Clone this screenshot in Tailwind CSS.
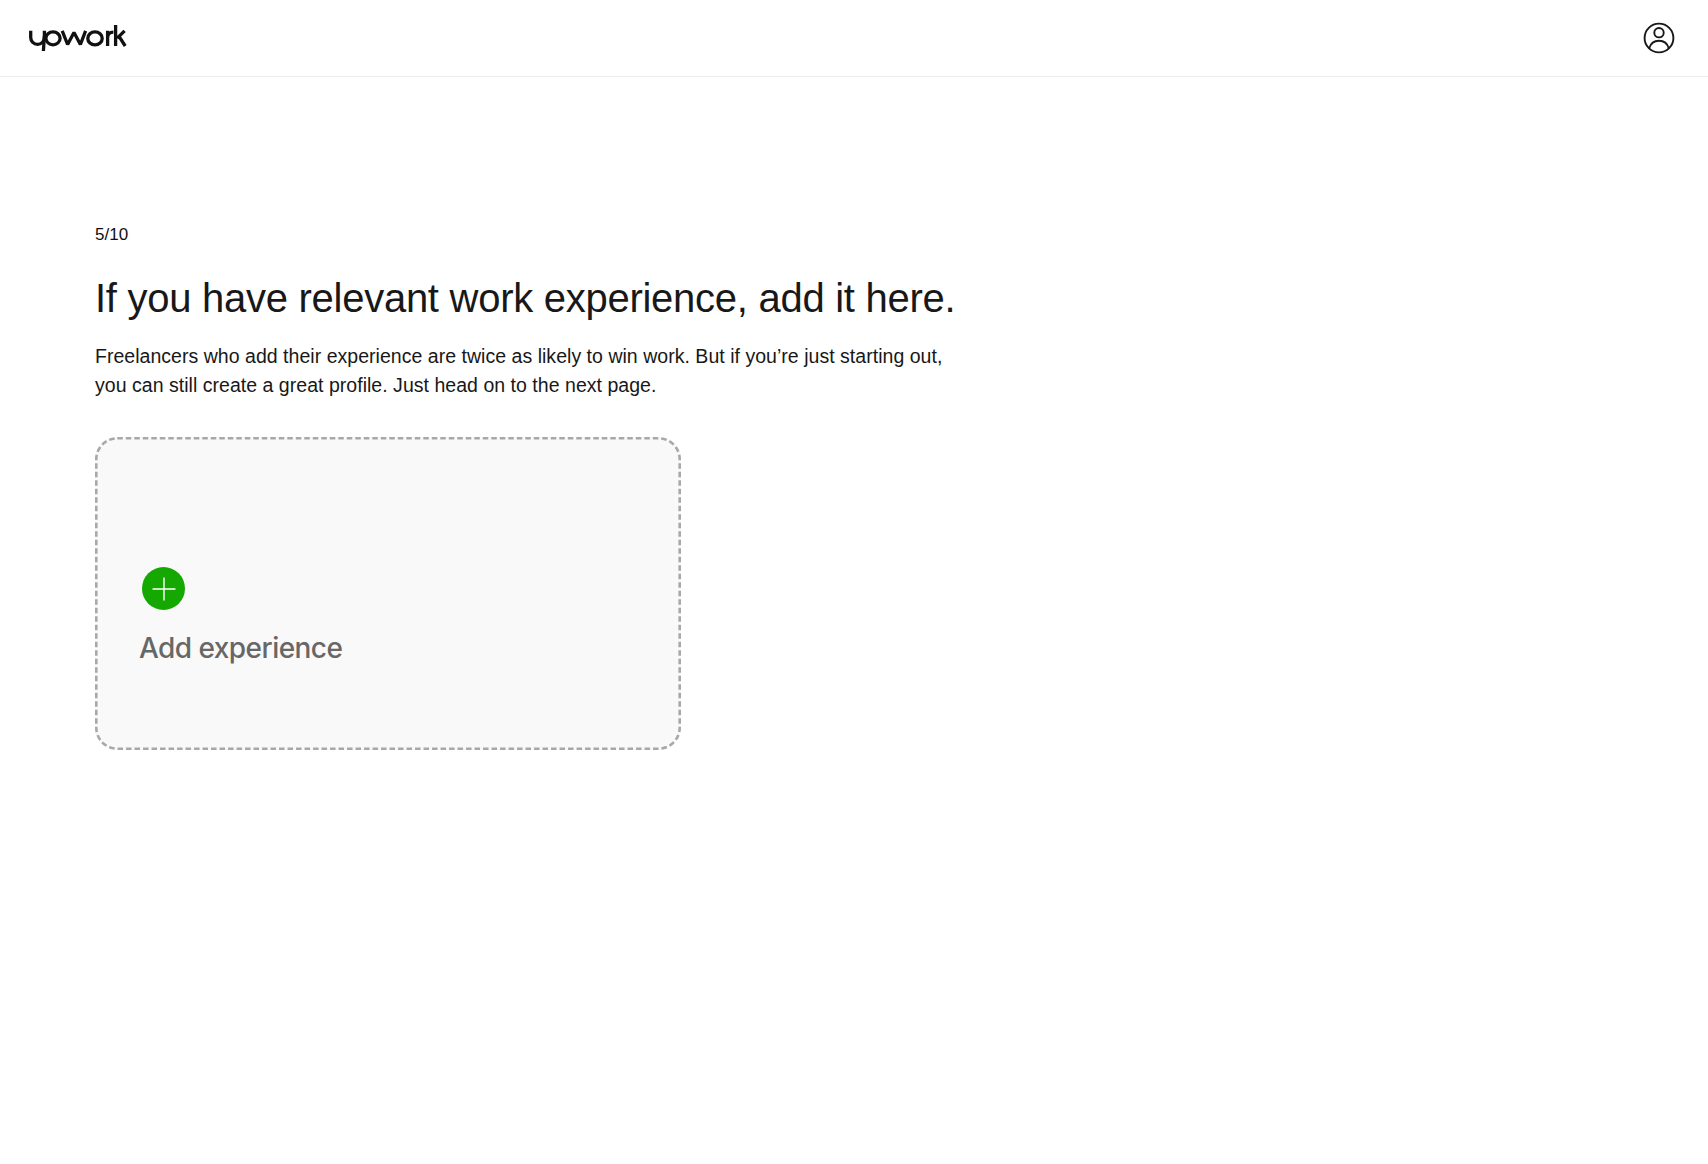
<!doctype html>
<html lang="en">
<head>
<meta charset="utf-8">
<title>Upwork</title>
<script src="https://cdn.jsdelivr.net/npm/@tailwindcss/browser@4"></script>
</head>
<body class="bg-white font-['Liberation_Sans',Arial,sans-serif] text-[#181818] antialiased">
<header class="h-[77px] border-b border-[#ededed] flex items-center justify-between pl-[29px] pr-[33px]">
  <svg class="w-[98px] h-[28px]" viewBox="0 0 98 28" fill="none" stroke="#111" stroke-width="3.3" stroke-linejoin="bevel" role="img" aria-label="upwork">
    <path d="M1.7 6.7V13.6a6.85 6.85 0 0 0 13.7 0V6.7"/>
    <path d="M15.4 12L14.4 27"/>
    <ellipse cx="24" cy="14.3" rx="7.1" ry="6.5"/>
    <path d="M33.2 6.8L38.6 20.5L45 8.5L51.4 20.5L56.6 6.8"/>
    <ellipse cx="66" cy="14.4" rx="7.2" ry="6.5"/>
    <path d="M78.6 22V6.7M78.6 14c0-3.8 2.2-5.8 5.8-5.8"/>
    <path d="M86.6 1V22M95.6 6.9L88.2 14.2M90.2 12.6L96.2 22"/>
  </svg>
  <svg class="w-[32px] h-[32px]" viewBox="0 0 32 32" fill="none" stroke="#181818" stroke-width="1.9" role="img" aria-label="Account">
    <circle cx="16" cy="16" r="14.4"/>
    <circle cx="16" cy="10.7" r="4.7"/>
    <path d="M6.2 26.4c1.4-4.9 5.2-7.6 9.8-7.6s8.4 2.7 9.8 7.6"/>
  </svg>
</header>
<main class="pl-[95px] pt-[146px]">
  <p class="text-[17px] leading-[24px] text-[#111]">5/10</p>
  <h1 class="mt-[25px] text-[40px] leading-[52px] font-normal tracking-[-0.27px] text-[#181818] whitespace-nowrap">If you have relevant work experience, add it here.</h1>
  <p class="mt-[18px] w-[880px] text-[19.5px] leading-[29px] tracking-[0.03px] text-[#181818]">Freelancers who add their experience are twice as likely to win work. But if you’re just starting out,<br>you can still create a great profile. Just head on to the next page.</p>
  <button type="button" class="relative mt-[37px] w-[586px] h-[313px] rounded-[22px] bg-[#f9f9f9] flex flex-col items-start justify-end pl-[46px] pb-[86px] text-left">
    <svg class="absolute inset-0 w-full h-full" fill="none"><rect x="1.3" y="1.3" width="583.4" height="310.4" rx="21" stroke="#a8a8a8" stroke-width="2.6" stroke-dasharray="5.5 3"/></svg>
    <span class="w-[43px] h-[43px] ml-[1px] rounded-full bg-[#14a800] flex items-center justify-center">
      <svg class="w-[24px] h-[24px]" viewBox="0 0 24 24" stroke="#fff" stroke-width="1.4"><path d="M12 0.5v23M0.5 12h23"/></svg>
    </span>
    <span class="mt-[22px] -ml-[2px] font-['Inter',sans-serif] text-[28px] leading-[32px] font-medium text-[#676767] tracking-[-0.55px]">Add experience</span>
  </button>
</main>
</body>
</html>
